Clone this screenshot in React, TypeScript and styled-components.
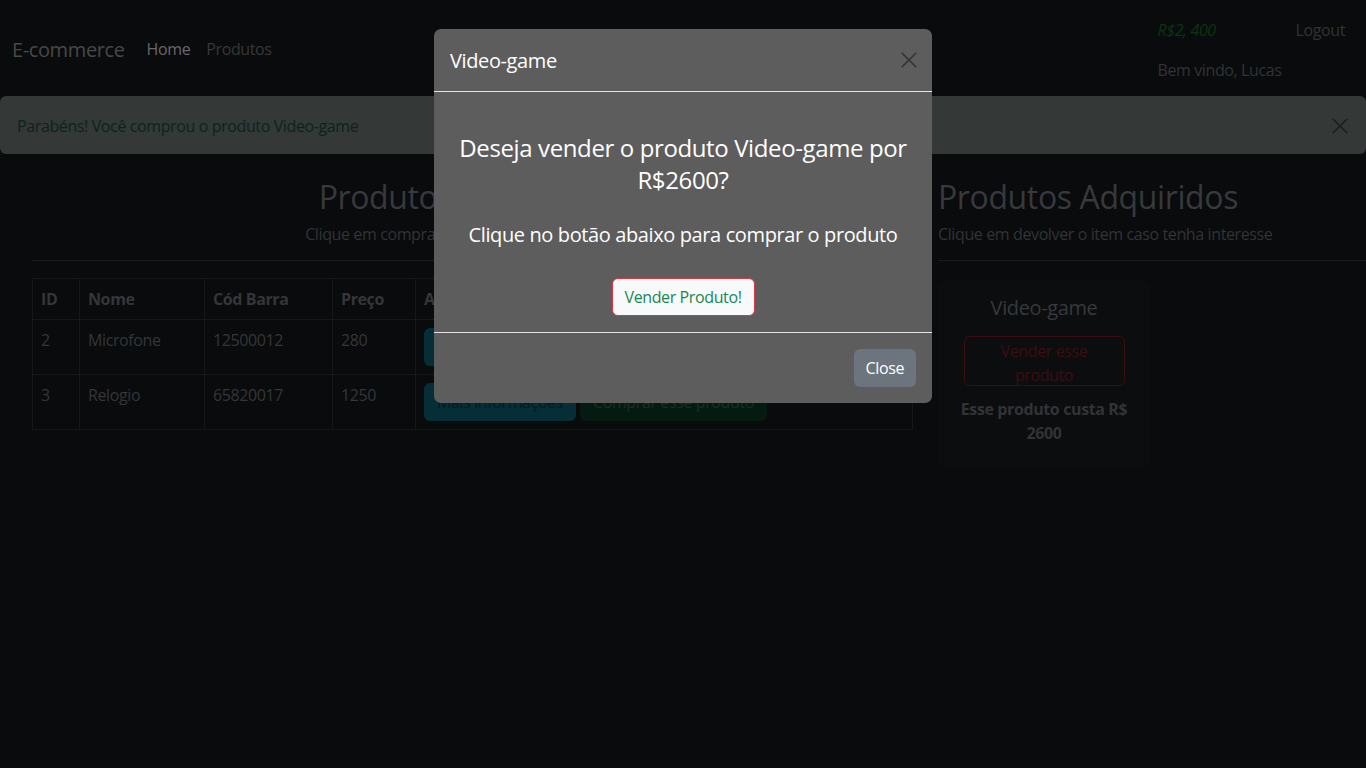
import React from 'react';
import styled, { createGlobalStyle } from 'styled-components';

const font = `"Open Sans", "Noto Sans", "Liberation Sans", sans-serif`;

const GlobalStyle = createGlobalStyle`
	html,
	body {
		margin: 0;
		background: #0a0b0d;
		font-family: ${font};
		font-size: 16px;
		line-height: 1.5;
		letter-spacing: -0.024em;
	}

	* {
		box-sizing: border-box;
	}

	button {
		letter-spacing: inherit;
	}
`;

type Product = {
	id: number;
	name: string;
	barcode: string;
	price: number;
};

const products: Product[] = [
	{ id: 2, name: 'Microfone', barcode: '12500012', price: 280 },
	{ id: 3, name: 'Relogio', barcode: '65820017', price: 1250 },
];

const CloseIcon = ({ size, color }: { size: number; color: string }) => (
	<svg width={size} height={size} viewBox="0 0 16 16" fill="none">
		<path d="M2 2L14 14M14 2L2 14" stroke={color} strokeWidth="1.4" strokeLinecap="square" />
	</svg>
);

export default function App() {
	return (
		<>
			<GlobalStyle />
			<Navbar>
				<Brand>E-commerce</Brand>
				<NavLink $active>Home</NavLink>
				<NavLink>Produtos</NavLink>
				<UserBox>
					<Balance>R$2, 400</Balance>
					<Logout>Logout</Logout>
					<Welcome>Bem vindo, Lucas</Welcome>
				</UserBox>
			</Navbar>

			<Alert>
				Parabéns! Você comprou o produto Video-game
				<AlertClose>
					<CloseIcon size={18} color="#1b1e1d" />
				</AlertClose>
			</Alert>

			<Main>
				<Column>
					<Heading $center>Produtos Disponíveis</Heading>
					<Lead $center>Clique em comprar o item caso tenha interesse</Lead>
					<Rule />
					<Table>
						<thead>
							<tr>
								<Th style={{ width: 47 }}>ID</Th>
								<Th style={{ width: 125 }}>Nome</Th>
								<Th style={{ width: 128 }}>Cód Barra</Th>
								<Th style={{ width: 83 }}>Preço</Th>
								<Th>Ações</Th>
							</tr>
						</thead>
						<tbody>
							{products.map((p) => (
								<tr key={p.id}>
									<Td>{p.id}</Td>
									<Td>{p.name}</Td>
									<Td>{p.barcode}</Td>
									<Td>{p.price}</Td>
									<Td>
										<Actions>
											<SolidButton $variant="info">Mais informações</SolidButton>
											<SolidButton $variant="success">Comprar esse produto</SolidButton>
										</Actions>
									</Td>
								</tr>
							))}
						</tbody>
					</Table>
				</Column>

				<Column>
					<Heading>Produtos Adquiridos</Heading>
					<Lead>Clique em devolver o item caso tenha interesse</Lead>
					<Rule />
					<Card>
						<CardTitle>Video-game</CardTitle>
						<OutlineDanger>Vender esse produto</OutlineDanger>
						<CardPrice>Esse produto custa R$ 2600</CardPrice>
					</Card>
				</Column>
			</Main>

			<Backdrop>
				<Dialog>
					<ModalHeader>
						<ModalTitle>Video-game</ModalTitle>
						<HeaderClose>
							<CloseIcon size={18} color="#333333" />
						</HeaderClose>
					</ModalHeader>
					<ModalBody>
						<Question>Deseja vender o produto Video-game por R$2600?</Question>
						<Hint>Clique no botão abaixo para comprar o produto</Hint>
						<SellButton>Vender Produto!</SellButton>
					</ModalBody>
					<ModalFooter>
						<GreyButton>Close</GreyButton>
					</ModalFooter>
				</Dialog>
			</Backdrop>
		</>
	);
}

const Navbar = styled.nav`
	display: flex;
	align-items: center;
	height: 96px;
	padding: 0 12px;
`;

const Brand = styled.a`
	font-size: 20px;
	color: #46484a;
	margin-right: 22px;
	margin-top: 3px;
`;

const NavLink = styled.a<{ $active?: boolean }>`
	font-size: 16px;
	color: ${({ $active }) => ($active ? '#66686b' : '#36383a')};
	margin-right: 16px;
	margin-top: 2px;
`;

const UserBox = styled.div`
	margin-left: auto;
	margin-right: 9px;
	display: grid;
	grid-template-columns: 138px auto;
	row-gap: 16px;
	align-self: flex-start;
	padding-top: 18px;
`;

const Balance = styled.span`
	color: #0a340d;
	font-style: italic;
`;

const Logout = styled.span`
	color: #313336;
`;

const Welcome = styled.span`
	color: #313336;
	grid-column: 1 / span 2;
`;

const Alert = styled.div`
	display: flex;
	align-items: center;
	height: 58px;
	padding: 1px 17px 0;
	background: #343837;
	border-radius: 6px;
	color: #0c231d;
`;

const AlertClose = styled.span`
	display: flex;
	margin-left: auto;
	margin-right: 0;
`;

const Main = styled.main`
	display: grid;
	grid-template-columns: 881px 1fr;
	column-gap: 25px;
	padding: 24px 0 0 32px;
`;

const Column = styled.section`
	display: flex;
	flex-direction: column;
`;

const Heading = styled.h1<{ $center?: boolean }>`
	margin: 0;
	font-size: 32px;
	font-weight: 400;
	line-height: 38px;
	color: #37393c;
	text-align: ${({ $center }) => ($center ? 'center' : 'left')};
`;

const Lead = styled.p<{ $center?: boolean }>`
	margin: 6px 0 0;
	color: #313336;
	text-align: ${({ $center }) => ($center ? 'center' : 'left')};
`;

const Rule = styled.hr`
	width: 100%;
	margin: 14px 0 17px;
	border: 0;
	border-top: 1px solid #1a1c1f;
`;

const Table = styled.table`
	width: 100%;
	border-collapse: collapse;
	border: 1px solid #15171a;
	color: #343639;
`;

const Th = styled.th`
	text-align: left;
	padding: 8px;
	border: 1px solid #15171a;
	font-weight: 700;
	color: #343639;
`;

const Td = styled.td`
	vertical-align: top;
	padding: 8px;
	height: 55px;
	border: 1px solid #15171a;
`;

const Actions = styled.div`
	display: flex;
	gap: 4px;
`;

const SolidButton = styled.button<{ $variant: 'info' | 'success' }>`
	font-family: ${font};
	font-size: 16px;
	line-height: 24px;
	padding: 6px 12px;
	border: 1px solid transparent;
	border-radius: 6px;
	background: ${({ $variant }) => ($variant === 'info' ? '#052e37' : '#041b12')};
	color: ${({ $variant }) => ($variant === 'info' ? '#08181c' : '#1a2e24')};
`;

const Card = styled.div`
	width: 212px;
	margin-top: 2px;
	padding: 16px 16px 22px;
	background: #0c0d0f;
	border-radius: 6px;
	display: flex;
	flex-direction: column;
	align-items: center;
	text-align: center;
`;

const CardTitle = styled.h5`
	margin: 0 0 16px;
	font-size: 20px;
	font-weight: 400;
	line-height: 24px;
	color: #37393c;
`;

const OutlineDanger = styled.button`
	width: 161px;
	height: 50px;
	padding: 2px 12px 0;
	font-family: ${font};
	font-size: 16px;
	line-height: 24px;
	background: transparent;
	border: 1px solid #3c0c11;
	border-radius: 6px;
	color: #3b0d12;
`;

const CardPrice = styled.p`
	margin: 11px 0 0;
	font-weight: 700;
	color: #313336;
`;

const Backdrop = styled.div`
	position: fixed;
	inset: 0;
	display: flex;
	justify-content: center;
	align-items: flex-start;
	padding-top: 29px;
`;

const Dialog = styled.div`
	width: 498px;
	background: #5d5d5d;
	border-radius: 7px;
	color: #ffffff;
`;

const ModalHeader = styled.div`
	display: flex;
	align-items: center;
	justify-content: space-between;
	padding: 17px 16px 15px;
	border-bottom: 1px solid #e4e4e4;
`;

const ModalTitle = styled.h5`
	margin: 0;
	font-size: 20px;
	font-weight: 400;
	line-height: 30px;
`;

const HeaderClose = styled.span`
	display: flex;
	margin-right: -2px;
	margin-top: -2px;
`;

const ModalBody = styled.div`
	padding: 40px 16px 16px;
	display: flex;
	flex-direction: column;
	align-items: center;
	text-align: center;
`;

const Question = styled.h4`
	margin: 0;
	font-size: 24px;
	font-weight: 400;
	line-height: 32px;
`;

const Hint = styled.p`
	margin: 24px 0 0;
	font-size: 20px;
	line-height: 30px;
`;

const SellButton = styled.button`
	margin-top: 28px;
	height: 38px;
	padding: 0 12px;
	font-family: ${font};
	font-size: 16px;
	background: #f8f9fa;
	border: 1px solid #dc3545;
	border-radius: 6px;
	color: #198754;
`;

const ModalFooter = styled.div`
	display: flex;
	justify-content: flex-end;
	padding: 16px;
	border-top: 1px solid #e4e4e4;
`;

const GreyButton = styled.button`
	height: 38px;
	padding: 0 12px;
	font-family: ${font};
	font-size: 16px;
	background: #6c757d;
	border: 0;
	border-radius: 6px;
	color: #ffffff;
`;
